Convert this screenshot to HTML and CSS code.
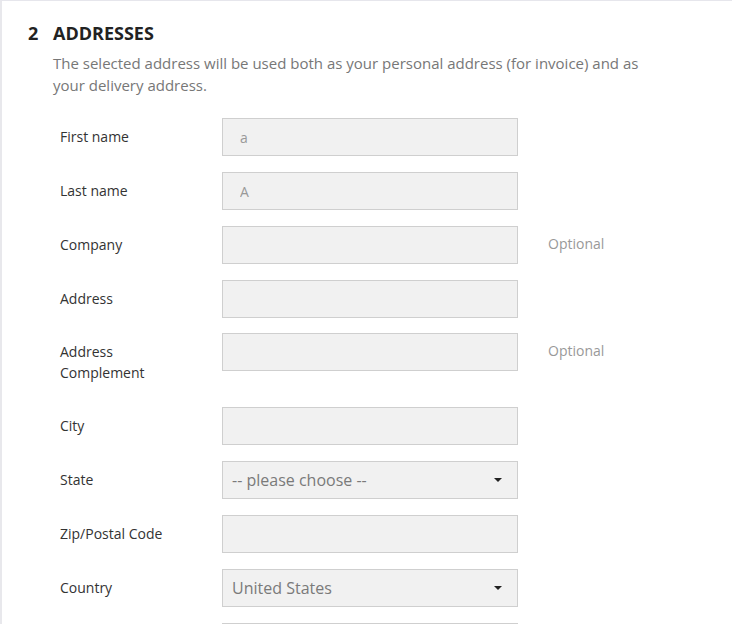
FILE: index.html
```html
<!DOCTYPE html>
<html>
<head>
<meta charset="utf-8">
<link rel="stylesheet" href="styles.css">
</head>
<body>
<section class="step">
  <h1 class="step-title"><span class="step-num">2</span>ADDRESSES</h1>
  <p class="step-desc">The selected address will be used both as your personal address (for invoice) and as your delivery address.</p>
  <form class="form">
    <div class="row">
      <label class="label">First name</label>
      <div class="field"><input class="input" type="text" value="a"></div>
    </div>
    <div class="row">
      <label class="label">Last name</label>
      <div class="field"><input class="input" type="text" value="A"></div>
    </div>
    <div class="row">
      <label class="label">Company</label>
      <div class="field"><input class="input" type="text" value=""></div>
      <span class="hint">Optional</span>
    </div>
    <div class="row">
      <label class="label">Address</label>
      <div class="field"><input class="input" type="text" value=""></div>
    </div>
    <div class="row row-tall">
      <label class="label">Address Complement</label>
      <div class="field"><input class="input" type="text" value=""></div>
      <span class="hint">Optional</span>
    </div>
    <div class="row">
      <label class="label">City</label>
      <div class="field"><input class="input" type="text" value=""></div>
    </div>
    <div class="row">
      <label class="label">State</label>
      <div class="field"><div class="select"><span class="select-text">-- please choose --</span><span class="caret"></span></div></div>
    </div>
    <div class="row">
      <label class="label">Zip/Postal Code</label>
      <div class="field"><input class="input" type="text" value=""></div>
    </div>
    <div class="row">
      <label class="label">Country</label>
      <div class="field"><div class="select"><span class="select-text">United States</span><span class="caret"></span></div></div>
    </div>
    <div class="row">
      <label class="label"></label>
      <div class="field"><input class="input" type="text" value=""></div>
    </div>
  </form>
</section>
</body>
</html>
```
FILE: styles.css
```css
html, body {
  margin: 0;
  padding: 0;
  background: #ffffff;
  overflow: hidden;
}
body {
  font-family: "Open Sans", "Liberation Sans", sans-serif;
  color: #333;
}
.step {
  border-top: 1px solid #e6e6ec;
  border-left: 2px solid #e8e8ec;
  height: 700px;
  padding: 21px 0 0 26px;
  box-sizing: border-box;
}
.step-title {
  margin: 0;
  font-size: 18px;
  line-height: 22px;
  font-weight: 700;
  color: #222;
  display: flex;
}
.step-num {
  width: 25px;
}
.step-desc {
  margin: 8px 0 0 25px;
  width: 620px;
  font-size: 15px;
  line-height: 22px;
  color: #777;
}
.form {
  margin: 22px 0 0 32px;
}
.row {
  display: flex;
  align-items: flex-start;
  margin-bottom: 16px;
}
.row-tall {
  margin-top: -1px;
}
.label {
  width: 124px;
  margin-right: 38px;
  padding: 8px 0;
  font-size: 14px;
  line-height: 21px;
  color: #333;
  min-height: 21px;
}
.field {
  width: 296px;
}
.input, .select {
  box-sizing: border-box;
  width: 296px;
  height: 38px;
  background: #f1f1f1;
  border: 1px solid #cfcfcf;
  border-radius: 0;
  margin: 0;
  padding: 0 17px;
  font-family: "Open Sans", "Liberation Sans", sans-serif;
  font-size: 14px;
  color: #999;
  outline: none;
  display: block;
}
.select {
  display: flex;
  align-items: center;
  justify-content: space-between;
  padding: 0 15px 0 9px;
  font-size: 16px;
  color: #7a7a7a;
}
.caret {
  width: 0;
  height: 0;
  border-left: 4px solid transparent;
  border-right: 4px solid transparent;
  border-top: 4px solid #222;
}
.hint {
  margin-left: 30px;
  padding: 8px 0;
  font-size: 14px;
  line-height: 20px;
  color: #999;
}
```
